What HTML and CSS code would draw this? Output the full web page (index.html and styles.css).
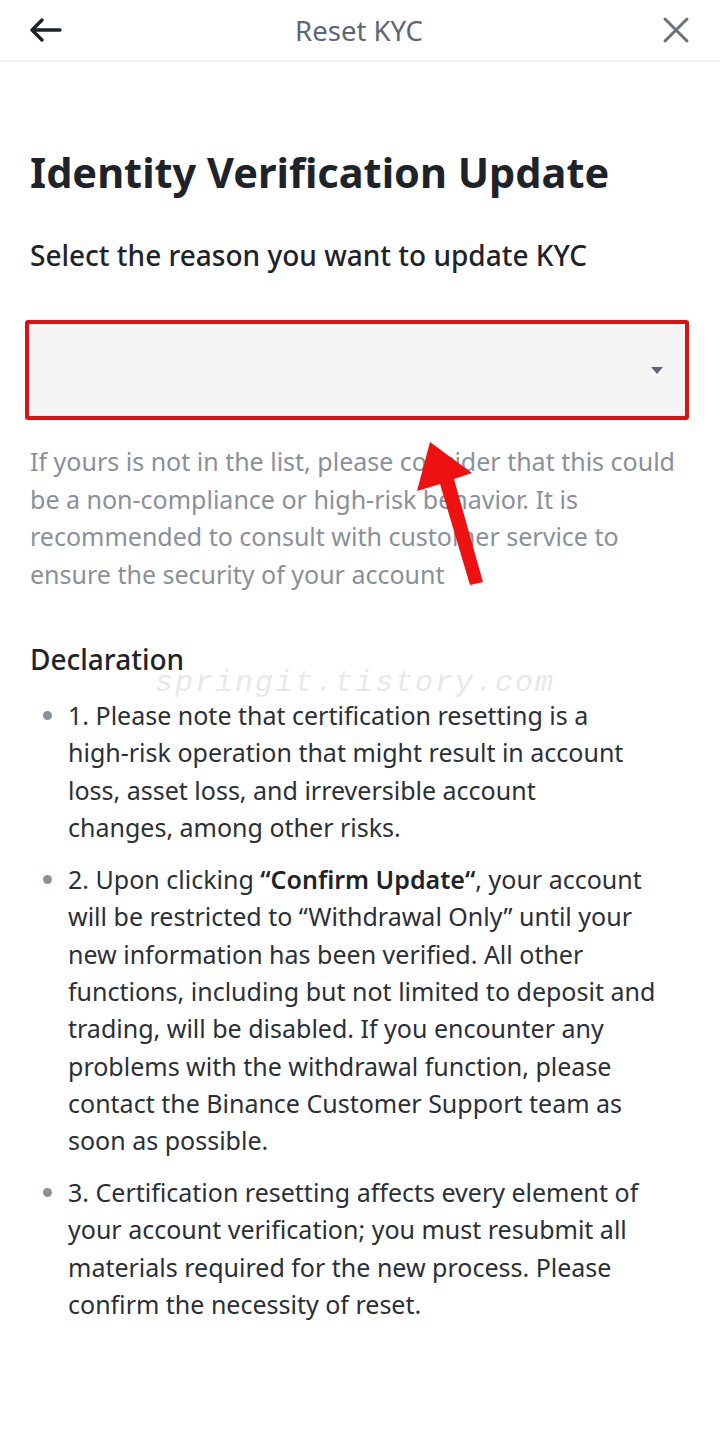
FILE: index.html
```html
<!DOCTYPE html>
<html lang="en">
<head>
  <meta charset="UTF-8" />
  <meta name="viewport" content="width=device-width, initial-scale=1.0" />
  <title>Reset KYC</title>
  <link rel="stylesheet" href="styles.css">
</head>
<body>

<div id="page">
  <div id="topBar">
    <span class="bar-icon">
      <svg width="34" height="26" viewBox="0 0 34 26"><path d="M32 13H4M14 3L4 13l10 10" fill="none" stroke="#1e2329" stroke-width="3.4" stroke-linecap="round" stroke-linejoin="round"/></svg>
    </span>
    <div class="bar-title">Reset KYC</div>
    <span class="bar-icon">
      <svg width="28" height="28" viewBox="0 0 28 28"><path d="M3 3l22 22M25 3L3 25" fill="none" stroke="#6b717a" stroke-width="3" stroke-linecap="round"/></svg>
    </span>
  </div>

  <div id="content">
    <h1>Identity Verification Update</h1>
    <h3>Select the reason you want to update KYC</h3>

    <div class="select-box">
      <span class="caret"></span>
    </div>

    <p class="hint">If yours is not in the list, please consider that this could be a non-compliance or high-risk behavior. It is recommended to consult with customer service to ensure the security of your account</p>

    <h3 class="decl">Declaration</h3>
    <ul class="decl-list">
      <li>1. Please note that certification resetting is a <span class="nowrap">high-risk</span> operation that might result in account loss, asset loss, and irreversible account <span class="nowrap">changes, among</span> other risks.</li>
      <li>2. Upon clicking <b>“Confirm Update“</b>, your account will be restricted to “Withdrawal Only” until your new information has been verified. All other functions, including but not limited to deposit and trading, will be disabled. If you encounter any problems with the withdrawal function, please contact the Binance Customer Support team as soon as possible.</li>
      <li>3. Certification resetting affects every element of your account verification; you must resubmit all materials required for the new process. Please confirm the necessity of reset.</li>
    </ul>
  </div>

  <div class="watermark">springit.tistory.com</div>

  <!-- 빨간 화살표 표시 -->
  <svg class="arrow" width="720" height="600" viewBox="0 0 720 600">
    <polygon points="430,442 417,491 440,484 470,585 483,582 454,479 472,473" fill="#ee1111"/>
  </svg>
</div>

</body>
</html>
```

FILE: styles.css
```css
body, html {
  margin: 0;
  background: #ffffff;
  font-family: "Noto Sans", sans-serif;
  color: #1e2329;
}

#page {
  position: relative;
  width: 720px;
  min-height: 1440px;
}

#topBar {
  display: flex;
  justify-content: space-between;
  align-items: center;
  height: 62px;
  padding: 0 30px 0 28px;
  border-bottom: 2px solid #f3f3f3;
  box-sizing: border-box;
}

.bar-icon {
  display: flex;
  align-items: center;
  width: 34px;
}

.bar-icon:last-child {
  justify-content: flex-end;
}

.bar-title {
  font-size: 27.5px;
  color: #5e6673;
}

#content {
  padding: 0 34px 0 30px;
}

h1 {
  font-size: 41.5px;
  font-weight: 700;
  margin: 86px 0 0 0;
  line-height: 48px;
}

h3 {
  font-size: 28px;
  font-weight: 500;
  margin: 41px 0 0 0;
  line-height: 36px;
}

.select-box {
  display: flex;
  justify-content: flex-end;
  align-items: center;
  margin: 47px -3px 0 -5px;
  height: 100px;
  background: #f5f5f5;
  border: 4px solid #e01010;
  border-radius: 3px;
  box-sizing: border-box;
  padding-right: 22px;
}

.caret {
  width: 0;
  height: 0;
  border-left: 6px solid transparent;
  border-right: 6px solid transparent;
  border-top: 7px solid #5e6673;
}

.hint {
  font-size: 25px;
  line-height: 37.5px;
  color: #8a9099;
  margin: 23px 0 0 0;
}

.decl {
  margin-top: 48px;
}

.decl-list {
  margin: 20px 0 0 0;
  padding: 0 26px 0 38px;
  font-size: 25px;
  line-height: 37.35px;
  color: #2b2f36;
}

.decl-list li {
  margin-bottom: 14.5px;
}

.decl-list li::marker {
  color: #8a9099;
}

.decl-list b {
  font-weight: 600;
  color: #1e2329;
}

.nowrap {
  white-space: nowrap;
}

.watermark {
  position: absolute;
  top: 668px;
  left: 155px;
  font-family: "Liberation Mono", monospace;
  font-style: italic;
  font-size: 30px;
  line-height: 30px;
  letter-spacing: 2px;
  color: #e8e8e8;
}

.arrow {
  position: absolute;
  top: 0;
  left: 0;
  pointer-events: none;
}
```
